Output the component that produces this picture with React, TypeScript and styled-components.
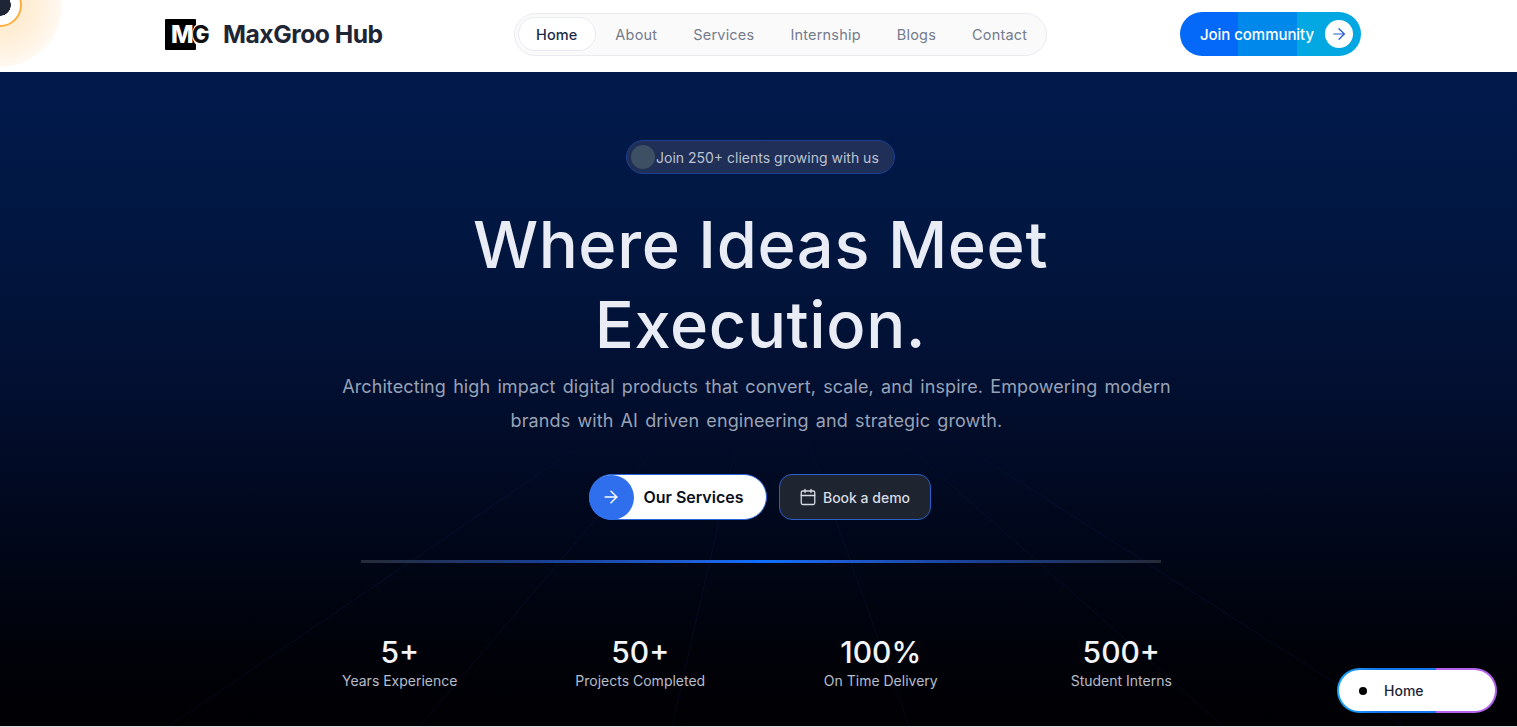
import React from "react";
import styled, { createGlobalStyle } from "styled-components";
import { ArrowRight, Calendar } from "lucide-react";

const Global = createGlobalStyle`
  html, body { margin: 0; padding: 0; background: #fff; }
  body { font-family: "Inter", "Liberation Sans", sans-serif; overflow: hidden; }
  * { box-sizing: border-box; }
`;

const Page = styled.div`
  position: relative;
  width: 100%;
  height: 727px;
  overflow: hidden;
  display: flex;
  flex-direction: column;
  border-bottom: 1px solid #d9dadc;
`;

const CursorGlow = styled.div`
  position: absolute;
  left: -62px;
  top: -57px;
  width: 124px;
  height: 124px;
  border-radius: 50%;
  background: radial-gradient(circle, #ffe9c8 0%, #ffeed6 35%, #fff2e0 50%, #fff8ef 66%, #fffdfa 82%, #fff 100%);
  display: flex;
  align-items: center;
  justify-content: center;
  &::before {
    content: "";
    width: 40px;
    height: 40px;
    border-radius: 50%;
    border: 2px solid #fbae3c;
    background: radial-gradient(circle, #1e2535 0 10.5px, #fff 11px);
  }
`;

const Header = styled.header`
  position: relative;
  height: 72px;
  flex: none;
  display: flex;
  align-items: center;
  justify-content: space-between;
  padding: 0 156px 4px 165px;
`;

const Brand = styled.div`
  display: flex;
  align-items: center;
  gap: 12px;
  width: 215px;
`;

const LogoMark = styled.div`
  position: relative;
  flex: none;
  width: 46px;
  height: 31px;
  display: flex;
  align-items: center;
  font-weight: 800;
  letter-spacing: -1px;
  &::before {
    content: "";
    position: absolute;
    left: 0;
    top: 0;
    width: 31px;
    height: 31px;
    background: #000;
    border-radius: 1px;
  }
`;

const LogoM = styled.span`
  position: relative;
  color: #fff;
  margin-left: 6px;
  font-size: 24px;
`;

const LogoG = styled.span`
  position: relative;
  color: #111;
  margin-left: -1px;
  font-size: 24px;
  line-height: 23px;
  font-weight: 700;
  background: #fff;
  border-radius: 50%;
`;

const BrandName = styled.span`
  flex: none;
  font-weight: 700;
  font-size: 24.7px;
  letter-spacing: -0.5px;
  color: #1e2535;
  white-space: nowrap;
`;

const Nav = styled.nav`
  width: 533px;
  height: 43px;
  border: 1px solid #e9ebef;
  border-radius: 22px;
  background: #fafafb;
  display: flex;
  align-items: center;
  padding: 0 3px;
`;

const NavItem = styled.a<{ $active?: boolean }>`
  height: 34px;
  flex: none;
  display: flex;
  align-items: center;
  padding: 0 ${(p) => (p.$active ? 17.5 : 18)}px;
  margin-right: ${(p) => (p.$active ? 1.5 : 0)}px;
  font-size: 14.5px;
  letter-spacing: ${(p) => (p.$active ? 0.1 : 0.2)}px;
  font-weight: ${(p) => (p.$active ? 500 : 400)};
  color: ${(p) => (p.$active ? "#1e2a45" : "#747b8b")};
  border-radius: 17px;
  background: ${(p) => (p.$active ? "#fff" : "transparent")};
  border: ${(p) => (p.$active ? "1px solid #e9ebf3" : "none")};
`;

const JoinButton = styled.button`
  width: 181px;
  height: 44px;
  border: none;
  border-radius: 22px;
  padding: 0 8px 0 20px;
  display: flex;
  align-items: center;
  justify-content: space-between;
  font-family: inherit;
  font-size: 15px;
  font-weight: 500;
  letter-spacing: -0.05px;
  color: #fff;
  background: linear-gradient(90deg, #0468f8 0 58px, #0089ea 58px 117px, #03a8e3 117px);
`;

const JoinIcon = styled.span`
  width: 28px;
  height: 28px;
  border-radius: 50%;
  background: #fff;
  color: #2559d8;
  display: flex;
  align-items: center;
  justify-content: center;
`;

const Hero = styled.main`
  position: relative;
  flex: 1;
  display: flex;
  flex-direction: column;
  align-items: center;
  padding: 68px 0 0 4px;
  background: linear-gradient(180deg, #011a4c 0%, #011742 22%, #021033 45%, #01081d 68%, #000209 88%, #000003 100%);
  overflow: hidden;
`;

const Rays = styled.svg`
  position: absolute;
  inset: 0;
  width: 100%;
  height: 100%;
  pointer-events: none;
  mask-image: linear-gradient(180deg, transparent 52%, #000 66%);
`;

const Badge = styled.div`
  position: relative;
  height: 34px;
  width: 269px;
  border-radius: 17px;
  border: 1px solid #1b3f90;
  background: #1f2f57;
  color: #bcc3d1;
  font-size: 14px;
  display: flex;
  align-items: center;
  gap: 1px;
  padding-left: 4px;
`;

const BadgeDot = styled.span`
  width: 24px;
  height: 24px;
  border-radius: 50%;
  background: #3d4f63;
`;

const Title = styled.h1`
  position: relative;
  margin: 31px 0 0;
  font-size: 65px;
  line-height: 80px;
  font-weight: 500;
  text-align: center;
  color: #e9ecf4;
  letter-spacing: 0.6px;
`;

const Lead = styled.p`
  position: relative;
  margin: 5px 0 0 -8px;
  width: 860px;
  font-size: 18px;
  line-height: 34px;
  text-align: center;
  color: #98a2b6;
  letter-spacing: 0.1px;
  word-spacing: 2px;
`;

const Actions = styled.div`
  position: relative;
  display: flex;
  gap: 12px;
  margin: 36px 0 0 -2px;
`;

const ServicesButton = styled.button`
  width: 178px;
  height: 46px;
  border-radius: 23px;
  border: 1px solid #2b66d9;
  background: #fff;
  padding: 0 22px 0 0;
  display: flex;
  align-items: center;
  justify-content: space-between;
  font-family: inherit;
  font-size: 16px;
  font-weight: 600;
  color: #0a0f1c;
`;

const ServicesIcon = styled.span`
  width: 45px;
  height: 45px;
  margin-left: -1px;
  border-radius: 50%;
  background: #2f6fed;
  color: #fff;
  display: flex;
  align-items: center;
  justify-content: center;
`;

const DemoButton = styled.button`
  width: 152px;
  height: 46px;
  border-radius: 13px;
  border: 1px solid #2b5fc9;
  background: #1e2430;
  color: #d7dbe4;
  display: flex;
  align-items: center;
  justify-content: center;
  gap: 6px;
  font-family: inherit;
  font-size: 14px;
  font-weight: 500;
`;

const Divider = styled.div`
  position: relative;
  width: 800px;
  height: 3px;
  margin: 40px 0 0;
  background: linear-gradient(90deg, #252a36 0%, #1a3f90 22%, #1f5fd8 42%, #0f70ff 50%, #1f5fd8 58%, #1a3f90 78%, #252a36 100%);
`;

const Stats = styled.div`
  position: relative;
  display: grid;
  grid-template-columns: repeat(4, 240.5px);
  margin: 70px 0 0;
`;

const Stat = styled.div`
  text-align: center;
`;

const StatValue = styled.div`
  font-size: 30px;
  line-height: 38px;
  font-weight: 500;
  color: #f2f4f8;
`;

const StatLabel = styled.div`
  font-size: 14px;
  line-height: 20px;
  color: #b7bdca;
`;

const FloatPill = styled.div`
  position: absolute;
  left: 1337px;
  top: 668px;
  width: 160px;
  height: 45px;
  border-radius: 23px;
  border: 2px solid transparent;
  background:
    linear-gradient(#fff, #fff) padding-box,
    linear-gradient(90deg, #1da8f5 0%, #1477f0 25%, #1477f0 62%, #b562ec 62%, #b562ec 100%) border-box;
  display: flex;
  align-items: center;
  gap: 17px;
  padding-left: 20px;
  font-size: 14px;
  font-weight: 500;
  color: #1e2535;
`;

const PillDot = styled.span`
  width: 8px;
  height: 8px;
  border-radius: 50%;
  background: #000;
`;

const navItems = ["Home", "About", "Services", "Internship", "Blogs", "Contact"];

const stats = [
  { value: "5+", label: "Years Experience" },
  { value: "50+", label: "Projects Completed" },
  { value: "100%", label: "On Time Delivery" },
  { value: "500+", label: "Student Interns" },
];

const rayTargets = [-596, -345, -93, 144, 458, 638];

export default function App() {
  return (
    <Page>
      <Global />
      <CursorGlow />
      <Header>
        <Brand>
          <LogoMark>
            <LogoM>M</LogoM>
            <LogoG>G</LogoG>
          </LogoMark>
          <BrandName>MaxGroo Hub</BrandName>
        </Brand>
        <Nav>
          {navItems.map((n, i) => (
            <NavItem key={n} $active={i === 0}>
              {n}
            </NavItem>
          ))}
        </Nav>
        <JoinButton>
          Join community
          <JoinIcon>
            <ArrowRight size={18} strokeWidth={1.6} />
          </JoinIcon>
        </JoinButton>
      </Header>
      <Hero>
        <Rays viewBox="0 0 1517 654" preserveAspectRatio="none">
          {rayTargets.map((dx) => (
            <line key={dx} x1={765} y1={248} x2={765 + dx} y2={654} stroke="#1a3a86" strokeOpacity={0.16} strokeWidth={1} />
          ))}
        </Rays>
        <Badge>
          <BadgeDot />
          Join 250+ clients growing with us
        </Badge>
        <Title>
          Where Ideas Meet
          <br />
          Execution.
        </Title>
        <Lead>
          Architecting high impact digital products that convert, scale, and inspire. Empowering modern brands with AI driven engineering and strategic growth.
        </Lead>
        <Actions>
          <ServicesButton>
            <ServicesIcon>
              <ArrowRight size={20} strokeWidth={1.75} />
            </ServicesIcon>
            Our Services
          </ServicesButton>
          <DemoButton>
            <Calendar size={18} strokeWidth={1.75} />
            Book a demo
          </DemoButton>
        </Actions>
        <Divider />
        <Stats>
          {stats.map((s) => (
            <Stat key={s.label}>
              <StatValue>{s.value}</StatValue>
              <StatLabel>{s.label}</StatLabel>
            </Stat>
          ))}
        </Stats>
      </Hero>
      <FloatPill>
        <PillDot />
        Home
      </FloatPill>
    </Page>
  );
}
